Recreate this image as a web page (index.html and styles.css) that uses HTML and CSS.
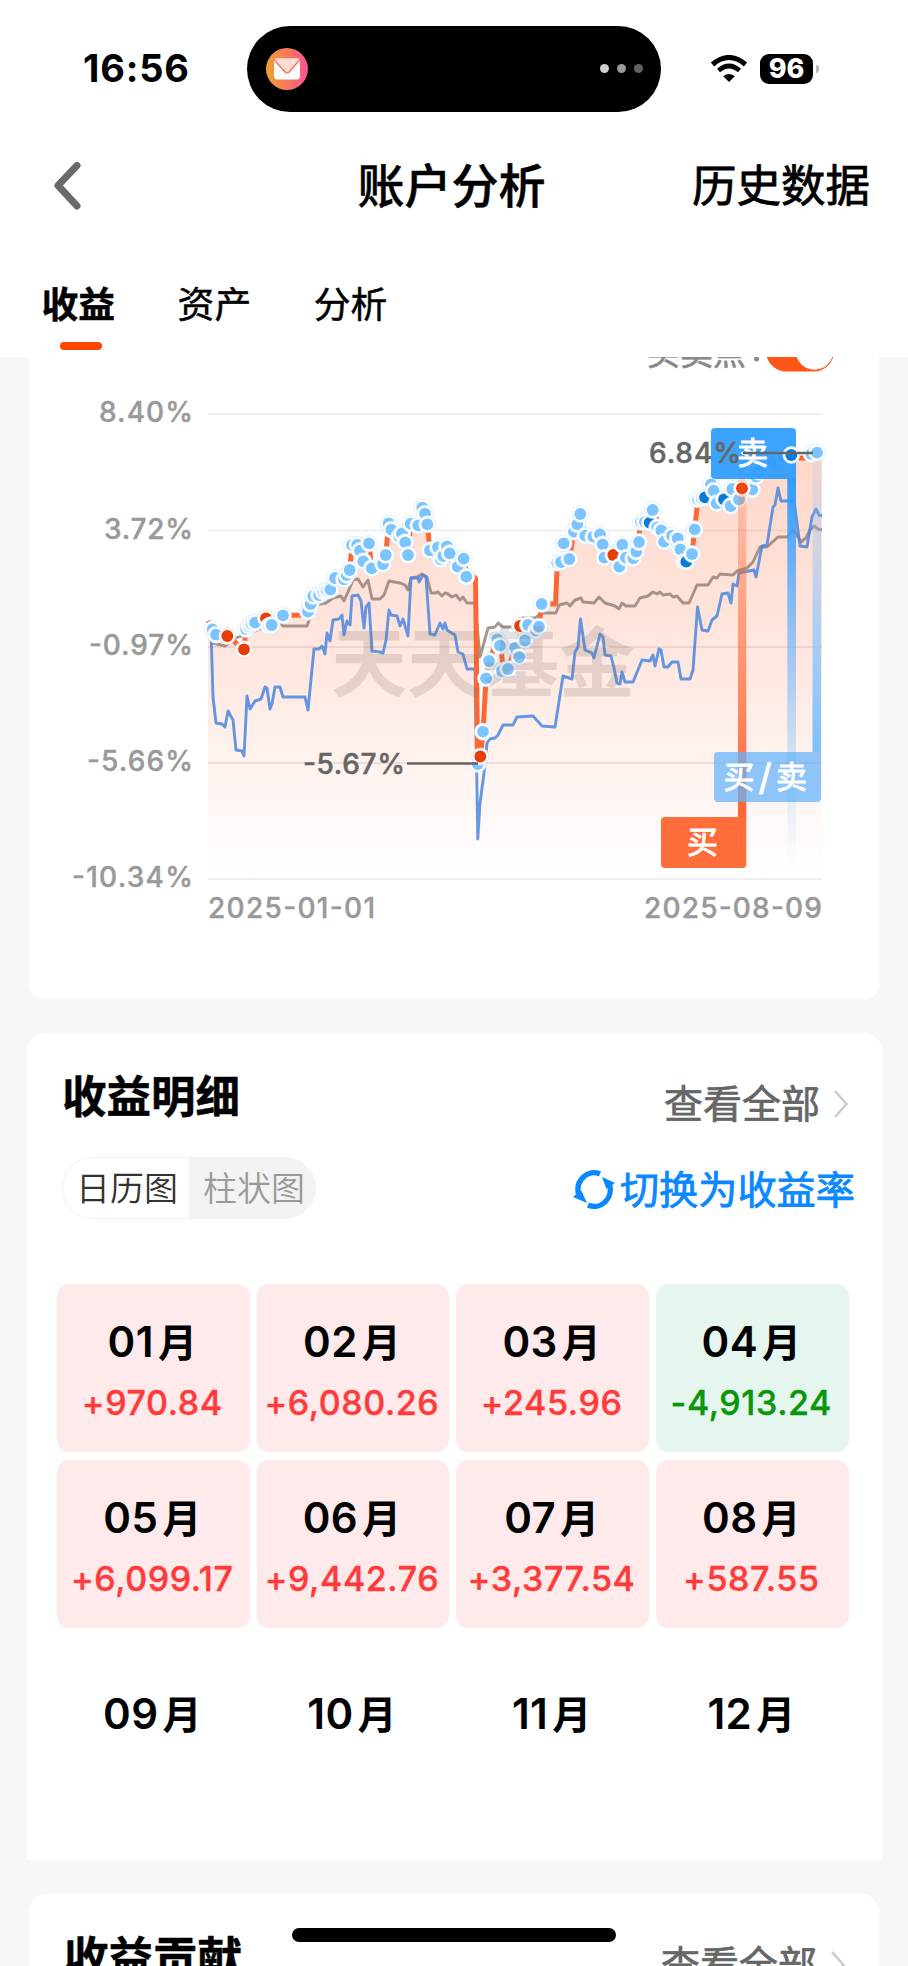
FILE: index.html
```html
<!DOCTYPE html>
<html lang="zh-CN">
<head>
    <meta charset="UTF-8">
    <meta name="viewport" content="width=device-width, initial-scale=1.0">
    <title>账户分析</title>
    <link rel="stylesheet" href="styles.css">
</head>
<body>
    <header>
        <div class="status-bar">
            <span class="time">16:56</span>
            <div class="island">
                <svg width="42" height="42" viewBox="0 0 42 42">
                    <defs>
                        <linearGradient id="mail" x1="0" y1="0" x2="1" y2="0">
                            <stop offset="0" stop-color="#eda230"/>
                            <stop offset="0.5" stop-color="#f8785a"/>
                            <stop offset="1" stop-color="#fc5296"/>
                        </linearGradient>
                    </defs>
                    <circle cx="21" cy="21" r="21" fill="url(#mail)"/>
                    <rect x="8" y="10.500" width="26" height="21" rx="3.500" fill="#fff"/>
                    <path d="M9 10.500H33L23.500 23Q21 26 18.500 23Z" fill="#fddbd3"/>
                    <path d="M8.500 12L18.500 23.500Q21 26.500 23.500 23.500L33.500 12" fill="none" stroke="#f07a5c" stroke-width="1.600"/>
                </svg>
                <div class="dots"><i></i><i></i><i></i></div>
            </div>
            <svg class="wifi" width="38" height="28" viewBox="0 0 38 28">
                <path d="M2.500 9.500Q19 -4.500 35.500 9.500" fill="none" stroke="#000" stroke-width="5"/>
                <path d="M8.500 15.500Q19 6.500 29.500 15.500" fill="none" stroke="#000" stroke-width="4.600"/>
                <path d="M19 27L13.200 21.200Q19 16.800 24.800 21.200Z" fill="#000"/>
            </svg>
            <span class="battery">96</span>
            <span class="battery-tip"></span>
        </div>
        <nav class="title-bar">
            <svg width="28" height="50" viewBox="0 0 28 50">
                <path d="M24 4.500L5 24.500L24 45" fill="none" stroke="#6a6a6a" stroke-width="7" stroke-linecap="round" stroke-linejoin="round"/>
            </svg>
            <h1>账户分析</h1>
            <a class="history">历史数据</a>
        </nav>
        <ul class="tabs">
            <li class="active">收益</li>
            <li>资产</li>
            <li>分析</li>
        </ul>
    </header>

    <main>
        <section class="card chart-card">
            <svg id="chart" width="850" height="642" viewBox="29 357 850 642">
                <defs>
                    <linearGradient id="area" gradientUnits="userSpaceOnUse" x1="0" y1="450" x2="0" y2="879">
                        <stop offset="0" stop-color="#ff6430" stop-opacity="0.260"/>
                        <stop offset="0.500" stop-color="#ff6430" stop-opacity="0.150"/>
                        <stop offset="1" stop-color="#ff6430" stop-opacity="0"/>
                    </linearGradient>
                    <linearGradient id="buyBar" x1="0" y1="0" x2="0" y2="1">
                        <stop offset="0" stop-color="#ff6430" stop-opacity="0.150"/>
                        <stop offset="1" stop-color="#ff6430"/>
                    </linearGradient>
                    <linearGradient id="sellBar" x1="0" y1="0" x2="0" y2="1">
                        <stop offset="0" stop-color="#2f9cff"/>
                        <stop offset="1" stop-color="#7dc0ff" stop-opacity="0"/>
                    </linearGradient>
                    <linearGradient id="bothBar" x1="0" y1="0" x2="0" y2="1">
                        <stop offset="0" stop-color="#7dc0ff" stop-opacity="0.100"/>
                        <stop offset="1" stop-color="#7dc0ff"/>
                    </linearGradient>
                </defs>

                <!-- buy/sell switch -->
                <text x="647" y="365" class="switch-text" textLength="99">买卖点</text>
                <circle cx="756.500" cy="359" r="2.500" fill="#888"/>
                <rect x="766" y="331" width="68" height="40.500" rx="20.250" fill="#ff5518"/>
                <circle cx="814.500" cy="351" r="18.700" fill="#fff"/>

                <g stroke="#ebebed" stroke-width="1.500">
                    <path d="M208 414H822M208 530.500H822M208 647H822M208 763H822M208 879H822"/>
                </g>
                <g class="axis">
                    <text x="99" y="422" textLength="94">8.40%</text>
                    <text x="104" y="539" textLength="89">3.72%</text>
                    <text x="89" y="655" textLength="104">-0.97%</text>
                    <text x="87" y="771" textLength="106">-5.66%</text>
                    <text x="72" y="887" textLength="121">-10.34%</text>
                    <text x="208" y="918" textLength="167">2025-01-01</text>
                    <text x="644" y="918" textLength="178">2025-08-09</text>
                </g>

                <path id="fill" fill="url(#area)"/>
                <path d="M208 647H822M208 763H822" stroke="#7a4a40" stroke-opacity="0.050" stroke-width="1.500"/>
                <path id="base" class="line" stroke="#8f7d76" stroke-opacity="0.800"/>
                <path id="index" class="line" stroke="#4a86e0" stroke-opacity="0.850"/>
                <path id="profit" fill="none" stroke="#fb6835" stroke-width="5" stroke-linejoin="round"/>
                <g id="points"></g>
                <text x="331" y="691" class="watermark" textLength="304">天天基金</text>

                <rect x="738" y="455" width="8.300" height="362" fill="url(#buyBar)"/>
                <rect x="787.300" y="478" width="8.700" height="390" fill="url(#sellBar)"/>
                <rect x="812.500" y="455" width="8.500" height="297" fill="url(#bothBar)"/>
                <path d="M661 821q0-4 4-4H746.300V864q0 4-4 4H665q-4 0-4-4Z" fill="#ff6d3a"/>
                <path d="M711 432q0-4 4-4H792q4 0 4 4V479H715q-4 0-4-4Z" fill="#2b9bff" fill-opacity="0.920"/>
                <path d="M714 756q0-4 4-4H821V798q0 4-4 4H718q-4 0-4-4Z" fill="#62b2fb" fill-opacity="0.720"/>
                <g class="flag">
                    <text x="702.500" y="853">买</text>
                    <text x="752.500" y="464">卖</text>
                    <text x="739" y="788">买</text>
                    <text x="765" y="790" class="slash">/</text>
                    <text x="791.500" y="788">卖</text>
                </g>
                <g id="flagPoints"></g>
                <g class="extreme">
                    <text x="649" y="463" textLength="92">6.84%</text>
                    <text x="303" y="774" textLength="102">-5.67%</text>
                    <path d="M743 453H813M407 763.500H478" stroke="#666" stroke-width="2.600"/>
                </g>
            </svg>
        </section>

        <section class="card detail-card">
            <div class="card-head">
                <h2>收益明细</h2>
                <a class="more">查看全部
                    <svg width="16" height="30" viewBox="0 0 16 30"><path d="M2 2L13.500 15L2 28" fill="none" stroke="#ccc" stroke-width="2.600"/></svg>
                </a>
            </div>
            <div class="tools">
                <div class="segment">
                    <span class="on">日历图</span>
                    <span>柱状图</span>
                </div>
                <a class="switch">
                    <svg width="42" height="40" viewBox="0 0 42 40">
                        <g fill="none" stroke="#0a88ff" stroke-width="5.400">
                            <path d="M5.500 24A16 17 0 0 1 27 4"/>
                            <path d="M36.500 14A16 17 0 0 1 15 35"/>
                        </g>
                        <path d="M29 7L42 13L33.500 19Z" fill="#0a88ff"/>
                        <path d="M0 27L8 20L14 33Z" fill="#0a88ff"/>
                    </svg>
                    切换为收益率
                </a>
            </div>
            <div class="months">
                <div class="month up"><b>01<i>月</i></b><span>+970.84</span></div>
                <div class="month up"><b>02<i>月</i></b><span>+6,080.26</span></div>
                <div class="month up"><b>03<i>月</i></b><span>+245.96</span></div>
                <div class="month down"><b>04<i>月</i></b><span>-4,913.24</span></div>
                <div class="month up"><b>05<i>月</i></b><span>+6,099.17</span></div>
                <div class="month up"><b>06<i>月</i></b><span>+9,442.76</span></div>
                <div class="month up"><b>07<i>月</i></b><span>+3,377.54</span></div>
                <div class="month up"><b>08<i>月</i></b><span>+587.55</span></div>
                <div class="month empty"><b>09<i>月</i></b></div>
                <div class="month empty"><b>10<i>月</i></b></div>
                <div class="month empty"><b>11<i>月</i></b></div>
                <div class="month empty"><b>12<i>月</i></b></div>
            </div>
        </section>

        <section class="card">
            <div class="card-head">
                <h2>收益贡献</h2>
                <a class="more">查看全部
                    <svg width="16" height="30" viewBox="0 0 16 30"><path d="M2 2L13.500 15L2 28" fill="none" stroke="#ccc" stroke-width="2.600"/></svg>
                </a>
            </div>
        </section>
    </main>
    <div class="home-bar"></div>

    <script>
        // trade points: x, y, type (b = buy, s = sell, default = both)
        const trades = [
            [212.7, 629.3], [216, 634.7], [227.3, 636, 'b'], [244, 649.3, 'b'], [246, 629], [249, 626], [251.5, 624], [255, 622.7],
            [266, 618.3, 'b'], [269, 626], [271.7, 625], [283, 615.3], [308, 611.7], [310.7, 604], [313.3, 596],
            [319, 595], [323.3, 591.7], [326.7, 590.7], [330.3, 589.7], [335, 578], [344, 579.3], [346.7, 575],
            [349.7, 570], [352, 545], [357.3, 545], [360, 550.7], [363.3, 561.3], [369, 543.3], [371.7, 568.3],
            [383, 564], [385.7, 555], [388.7, 523.3], [391.3, 529.7], [399.3, 536.7], [402, 533.3], [405.3, 542.3],
            [408, 555], [410.7, 523.7], [418.3, 525.3], [422.3, 507.7], [425, 513.7], [427.3, 524.3], [430, 550.3],
            [438, 547.3], [440.7, 559.3], [443.3, 556], [447, 546.3], [449.7, 553.3], [457.7, 566.7], [463.7, 558.7],
            [466.3, 576.7], [477.7, 764], [480.3, 756.5, 'b'], [483, 731.7], [486, 678.3], [489, 661],
            [497.3, 639.3], [500, 645.7], [502, 671], [508, 669], [515, 648], [519.3, 657], [520, 626, 'b'], [525, 640.3],
            [528, 625], [536, 630.7], [539, 626.7], [541.7, 604], [557.3, 562.7], [561, 562], [569.3, 559], [563.7, 543.3],
            [574, 531.7], [577.3, 524.3], [580.3, 514], [585.3, 535.7], [593.3, 536.7], [600, 534.3], [602.7, 544.3],
            [604.3, 557.7], [613.3, 555, 'b'], [619.3, 566.7], [622.3, 544.7], [626, 557.7], [633.3, 558.3], [636.3, 551.7],
            [639, 542], [641, 522], [645, 522], [649.7, 522.7, 's'], [652.7, 510], [657.3, 527.3], [661.3, 530.3],
            [666.7, 541.7, 's'], [664, 541.7], [672, 535.7], [677.7, 538.3], [680.3, 549.3], [684, 561.7], [686.3, 561.7, 's'],
            [692, 554], [694.7, 529.3], [698, 499.3], [701.7, 498.3], [705, 497.3, 's'], [711, 484.3], [713.7, 490.7],
            [716.7, 503.3], [724, 499.3, 's'], [730.7, 506], [732.3, 489], [739, 499.3], [752.3, 489.7],
            [756, 476.7], [758.3, 471.7], [761.7, 466.7], [773.3, 461.7], [783, 457], [742, 488.3, 'b']
        ];
        // points drawn above the flags
        const lastTrades = [[791.3, 455, 's'], [811.5, 454], [817, 452.7]];

        const profitLine = '208,621 212.7,629.3 216,634.7 227.3,636 236,643 244,649.3 246,629 255,622.7 266,618.3 271.7,625 283,615.3 308,615 310.7,604 313.3,596 330.3,589.7 335,578 349.7,570 352,545 360,550.7 363.3,561.3 369,543.3 371.7,568.3 385.7,555 388.7,523.3 399.3,536.7 405.3,542.3 408,555 410.7,523.7 418.3,525.3 422.3,507.7 427.3,524.3 430,550.3 447,546.3 463.7,558.7 466.3,572 475.500,578 477.7,764 480.3,756.5 483,731.7 486,678.3 489,661 497.3,640 501,648 503,668 508,669 515,648 519.3,657 525,640.3 528,625 539,626.7 541.7,604 555.500,604 557.3,562.7 563.7,559 569.3,559 574,531.7 580.3,514 585.3,535.7 600,534.3 604.3,557.7 619.3,566.7 622.3,544.7 626,557.7 636.3,551.7 641,522 652.7,510 666.7,541.7 680.3,549.3 686.3,561.7 692,554 694.7,529.3 698,499.3 711,484.3 716.7,503.3 730.7,506 742,488.3 752.3,489.7 758.3,471.7 773.3,461.7 791.3,455 800,458 808,458 817,452.7 822,453';
        const baseLine = '208,630 213,643 225,646 236,638 250,633 260,629 272,626 280,623 283,626 307,626 310,617 314,606 320,604 326,603 333,598 341,596 344,601 348,592 353,580 358,579 363,587 368,580 372,599 380,599 384,595 389,581 400,583 405,585 408,590 411,578 417,577 422,574 427,577 431,593 435,593 438,592 442,596 445,593 448,594 452,597 456,595 460,600 463,597 467,603 475,603 480,657 488,628 495,627 498,623 503,627 513,627 522,618 535,618 542,613 556,613 559,605 567,603 570,606 575,600 581,598 583,602 594,603 599,597 605,603 615,606 619,609 622,603 626,606 635,606 640,598 648,596 653,592 657,594 660,592 663,595 670,594 673,597 677,596 683,603 689,603 697,585 708,585 713,577 717,578 720,574 733,575 737,571 747,568 753,562 760,547 767,547 778,537 787,537 794,530 801,542 806,538 810,530 814,526 818,529 822,530';
        const indexLine = '208,621 211,630 213,697 216,723 222,724 225,727 228,711 233,720 236,750 242,751 244,756 247,696 250,709 255,701 261,699 265,687 267,688 270,709 272,704 275,687 280,687 283,697 305,697 308,710 314,649 319,649 322,646 325,654 327,633 330,641 333,620 339,619 342,615 344,635 347,621 350,625 352,596 358,595 361,601 364,628 366,607 369,603 372,651 380,652 383,653 386,640 389,610 391,615 397,616 400,626 403,619 408,636 411,578 418,578 419,582 423,575 426,577 430,634 435,635 437,630 440,623 443,629 445,623 447,630 455,635 458,652 463,654 467,669 475,669 477.800,839 480,803 484,773 487,743 490,739 495,738 498,735 503,725 513,725 517,717 533,716 542,726 555,727 560,695 563,676 572,679 575,652 578,647 580.500,619 585,650 592,653 594,658 600,634 603,637 605,655 611,656 614,668 617,683 620,684 622,672 625,682 633,682 642,660 650,661 653,655 655,666 659,649 661,650 664,667 668,667 672,662 678,662 681,679 690,679 693,670 697.500,607 702,630 708,631 712,620 717,616 722,594 728,593 731,603 733,584 737,586 739,573 754,570 756,577 762,546 767,545 773,507 775,505 778,488 781,501 787,501 794,500 800,546 807,547 812,517 816,509 819,515 822,516';

        const colors = { b: '#e63e05', s: '#0a7ad8' };

        function setPath(id, pts, tail) {
            document.getElementById(id).setAttribute('d', 'M' + pts.replaceAll(' ', 'L') + (tail || ''));
        }

        function drawPoints(id, list) {
            let html = '';
            list.forEach(([x, y, type]) => {
                const color = colors[type] || '#7cc4ff';
                const ring = type === 'b' ? '#f9d8cc' : '#d3eaff';
                html += `<circle cx="${x}" cy="${y}" r="8.500" fill="#fff" stroke="${ring}" stroke-width="0.700"/>`;
                html += `<circle cx="${x}" cy="${y}" r="5.900" fill="${color}"/>`;
            });
            document.getElementById(id).innerHTML = html;
        }

        setPath('fill', profitLine, 'V879H208Z');
        setPath('profit', profitLine);
        setPath('base', baseLine);
        setPath('index', indexLine);
        drawPoints('points', trades);
        drawPoints('flagPoints', lastTrades);
    </script>
</body>
</html>
```

FILE: styles.css
```css
* {
    box-sizing: border-box;
}

body {
    margin: 0;
    height: 1966px;
    overflow: hidden;
    background-color: #f7f7f7;
    color: #000;
    font-family: Inter, "Noto Sans CJK SC", sans-serif;
}

h1, h2, ul {
    margin: 0;
    padding: 0;
}

svg {
    display: block;
    flex-shrink: 0;
}

header {
    height: 357px;
    background-color: #fff;
}

.status-bar {
    display: flex;
    align-items: center;
    height: 137px;
    padding-left: 83px;
}

.time {
    width: 164px;
    font-size: 38px;
    font-weight: 700;
    letter-spacing: 0.8px;
    line-height: 50px;
    padding-bottom: 1px;
}

.island {
    display: flex;
    align-items: center;
    justify-content: space-between;
    width: 414px;
    height: 86px;
    padding: 0 18px 0 19px;
    border-radius: 43px;
    background-color: #000;
}

.dots {
    display: flex;
    gap: 8px;
}

.dots i {
    width: 9px;
    height: 9px;
    border-radius: 50%;
    background-color: #d0d0d0;
}

.dots i:nth-child(2) {
    background-color: #9a9a9a;
}

.dots i:nth-child(3) {
    background-color: #626262;
}

.wifi {
    margin-left: 49px;
}

.battery {
    width: 53px;
    height: 30px;
    margin-left: 12px;
    border-radius: 9px;
    background-color: #000;
    color: #fff;
    font-size: 27px;
    font-weight: 800;
    line-height: 30px;
    text-align: center;
}

.battery-tip {
    width: 3px;
    height: 8px;
    margin-left: 3px;
    border-radius: 0 3px 3px 0;
    background-color: #bbb;
}

.title-bar {
    display: grid;
    grid-template-columns: 1fr auto 1fr;
    align-items: center;
    height: 96px;
    padding: 2px 38px 0 33px;
}

.title-bar svg {
    margin-left: 20px;
}

.title-bar h1 {
    font-size: 47px;
    font-weight: 500;
    line-height: 60px;
    -webkit-text-stroke: 0.5px #000;
}

.history {
    justify-self: end;
    font-size: 44.5px;
    line-height: 60px;
    -webkit-text-stroke: 0.8px #000;
}

.tabs {
    display: flex;
    gap: 62.5px;
    padding: 46px 0 0 41.5px;
    list-style: none;
    font-size: 36.8px;
    line-height: 52px;
    -webkit-text-stroke: 0.5px #000;
}

.tabs .active {
    font-weight: 700;
}

.tabs .active::after {
    content: "";
    display: block;
    width: 42px;
    height: 8px;
    margin: 11px 0 0 18px;
    border-radius: 4px;
    background-color: #ff4500;
}

main {
    display: flex;
    flex-direction: column;
    gap: 34px;
}

.card {
    margin: 0 29px;
    border-radius: 18px;
    background-color: #fff;
}

.chart-card {
    border-radius: 0 0 14px 14px;
}

.switch-text {
    font-size: 33px;
    fill: #888;
    stroke: #888;
    stroke-width: 0.6px;
}

.axis text {
    font-size: 28px;
    font-weight: 500;
    fill: #999;
    stroke: #999;
    stroke-width: 0.4px;
}

.extreme text {
    font-size: 28px;
    font-weight: 500;
    fill: #666;
    stroke: #666;
    stroke-width: 0.5px;
}

.flag text {
    font-size: 31px;
    font-weight: 400;
    fill: #fff;
    stroke: #fff;
    stroke-width: 0.9px;
    text-anchor: middle;
}

.flag .slash {
    font-size: 36px;
}

.watermark {
    font-size: 76px;
    font-weight: 700;
    fill: #77706e;
    fill-opacity: 0.2;
}

.line {
    fill: none;
    stroke-width: 2.9;
    stroke-linejoin: round;
}

.detail-card {
    height: 827px;
    margin: 0 26px 0 27px;
    border-radius: 18px 18px 0 0;
}

.card-head {
    display: flex;
    justify-content: space-between;
    padding: 31px 33px 0 35px;
}

.card-head h2 {
    font-size: 44.5px;
    font-weight: 700;
    line-height: 66px;
    -webkit-text-stroke: 0.5px #000;
}

.more {
    display: flex;
    align-items: center;
    gap: 13px;
    padding-top: 14px;
    color: #666;
    font-size: 39px;
    line-height: 52px;
    -webkit-text-stroke: 0.7px #666;
}

.tools {
    display: flex;
    align-items: center;
    justify-content: space-between;
    margin-top: 27px;
    padding: 0 27px 0 35px;
}

.segment {
    display: flex;
    width: 254px;
    height: 62px;
    border: 1px solid #f3f3f3;
    border-radius: 31px;
    overflow: hidden;
    background-color: #f3f3f3;
    color: #999;
    font-size: 34px;
    font-weight: 350;
    line-height: 61px;
}

.segment span {
    width: 127px;
    padding-left: 14px;
}

.segment .on {
    padding-left: 13px;
    background-color: #fff;
    color: #333;
}

.switch {
    display: flex;
    align-items: center;
    gap: 5px;
    color: #0a88ff;
    font-size: 39.2px;
    line-height: 56px;
    padding-top: 4px;
    -webkit-text-stroke: 0.8px #0a88ff;
}

.months {
    display: grid;
    grid-template-columns: repeat(4, 192.5px);
    grid-auto-rows: 167.5px;
    gap: 8.5px 7.2px;
    padding: 65px 0 0 30px;
}

.month {
    display: flex;
    flex-direction: column;
    align-items: center;
    padding-top: 28px;
    border-radius: 12px;
}

.month b {
    font-size: 42px;
    font-weight: 600;
    line-height: 60px;
    letter-spacing: 0.4px;
    margin-right: 2px;
}

.month i {
    margin-left: 4px;
    font-size: 39px;
    font-style: normal;
    letter-spacing: 0;
}

.month span {
    margin-right: 2px;
    font-size: 34px;
    font-weight: 500;
    line-height: 60px;
    letter-spacing: 0.6px;
    -webkit-text-stroke: 0.4px currentColor;
}

.empty {
    padding-top: 48px;
}

.up {
    background-color: #ffeaeb;
}

.up span {
    color: #ff3a3a;
}

.down {
    background-color: #e5f6ee;
}

.down span {
    color: #0a960a;
}

.home-bar {
    position: fixed;
    left: 292px;
    top: 1928px;
    width: 324px;
    height: 14px;
    border-radius: 7px;
    background-color: #000;
}
```
